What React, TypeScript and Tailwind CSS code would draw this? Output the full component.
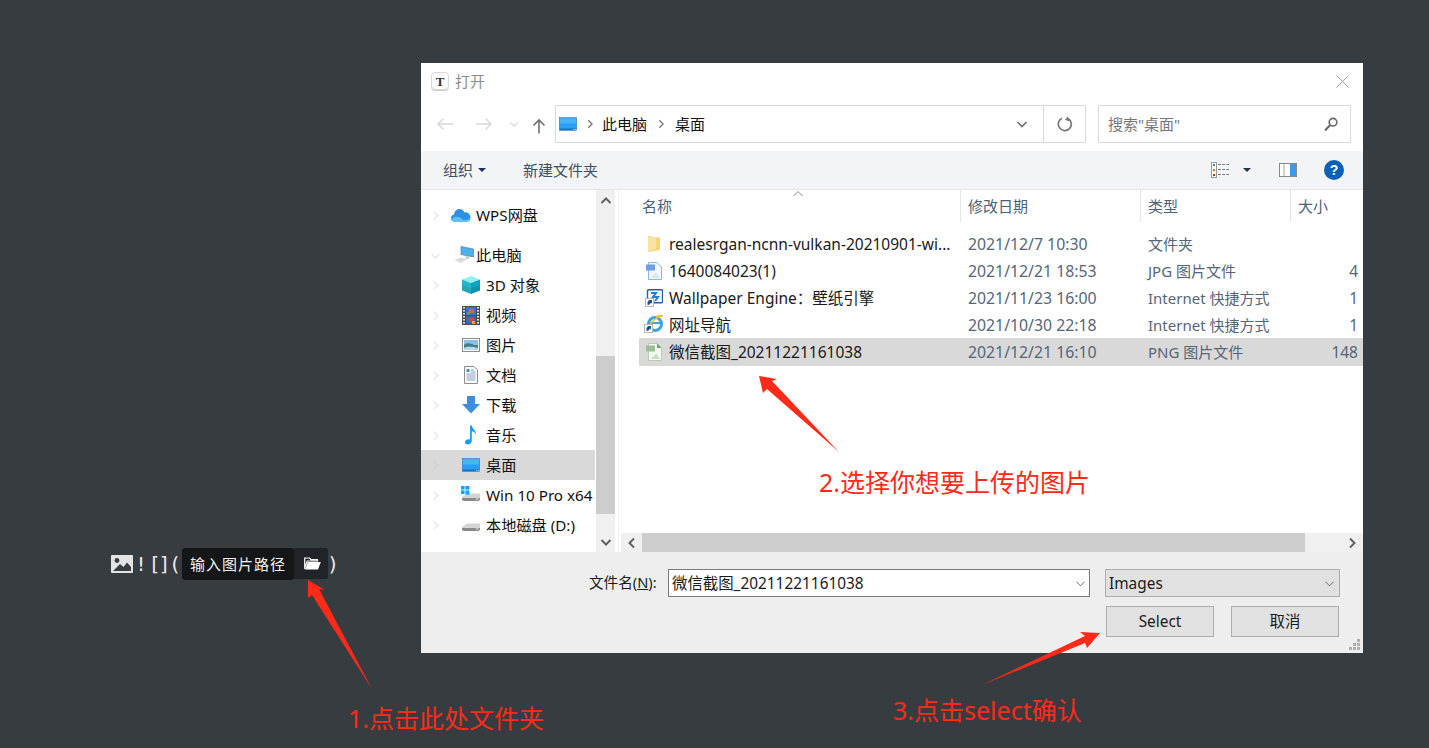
import React from "react";

const FONT = "font-['Noto_Sans','Noto_Sans_CJK_SC',sans-serif]";

function Chevron({ dir = "right", color = "#e6e6e6", size = 12, w = 1.5 }: { dir?: string; color?: string; size?: number; w?: number }) {
  const d: Record<string, string> = {
    right: "M4 1.5 L8.5 6 L4 10.5",
    left: "M8 1.5 L3.5 6 L8 10.5",
    down: "M1.5 4 L6 8.5 L10.5 4",
    up: "M1.5 8 L6 3.5 L10.5 8",
  };
  return (
    <svg width={size} height={size} viewBox="0 0 12 12" fill="none" className="shrink-0">
      <path d={d[dir]} stroke={color} strokeWidth={w} />
    </svg>
  );
}

function DesktopIcon({ w = 20, h = 15 }: { w?: number; h?: number }) {
  return (
    <svg width={w} height={h} viewBox="0 0 20 15" className="shrink-0">
      <rect x="0.5" y="0.5" width="19" height="14" fill="#2a9df4" stroke="#1a6fb5" strokeWidth="0.6" />
      <rect x="1" y="1" width="18" height="6" fill="#46b4f7" />
      <rect x="1" y="12.6" width="18" height="1.4" fill="#0f6cc0" />
      <rect x="16" y="13" width="1" height="1" fill="#fff" />
      <rect x="18" y="13" width="1" height="1" fill="#fff" />
    </svg>
  );
}

function Drive({ win = false }: { win?: boolean }) {
  return (
    <svg width="20" height="18" viewBox="0 0 20 18" className="shrink-0">
      <path d="M1 11 L6 7.5 H19 L19 12 L17 15 H3 L1 13 Z" fill="#d4d4d4" />
      <path d="M1 12 H19 V13.5 L17.5 15 H2.5 L1 13.5 Z" fill="#8a8a8a" />
      <rect x="15" y="12.5" width="2.5" height="1" fill="#e8f3e8" />
      {win && (
        <g fill="#12a5f4">
          <rect x="0" y="0" width="3.6" height="3.6" />
          <rect x="4.4" y="-0.6" width="4" height="4.2" />
          <rect x="0" y="4.4" width="3.6" height="3.6" />
          <rect x="4.4" y="4.4" width="4" height="4.2" />
        </g>
      )}
    </svg>
  );
}

function NavIcon({ name }: { name: string }) {
  switch (name) {
    case "cloud":
      return (
        <svg width="20" height="15" viewBox="0 0 20 15" className="shrink-0">
          <path d="M4.5 14 C1.5 14 0 12 0 10 C0 8 1.4 6.8 3 6.5 C3.5 3 6 1 8.5 1 C11 1 12.6 2.3 13.4 4.5 C14 4.2 15 4.2 16 4.6 C18 5.2 19.5 7.5 19.5 10 C19.5 12.5 17.5 14 15.5 14 Z" fill="#2c8fe8" />
          <path d="M1 11 C4 8 8 8 11 11 C13 13 17 12 19 10 C19 12.8 17.3 14 15.5 14 H4.5 C2.6 14 1.3 12.6 1 11 Z" fill="#63c0f7" />
        </svg>
      );
    case "pc":
      return (
        <svg width="20" height="18" viewBox="0 0 20 18" className="shrink-0">
          <path d="M7 0.5 L19.5 3 V11 L7 8.5 Z" fill="#4db1ee" stroke="#5b7f9b" strokeWidth="0.7" />
          <path d="M12 10 L15 10.6 V13 L11 12.5 Z" fill="#c2c8cc" />
          <path d="M0.5 14 L7 11.5 L13 13.5 L6.5 17 Z" fill="#d9dcde" />
        </svg>
      );
    case "3d":
      return (
        <svg width="18" height="18" viewBox="0 0 18 18" className="shrink-0">
          <path d="M9 0 L18 3.5 L9 7 L0 3.5 Z" fill="#8ef0f0" />
          <path d="M0 3.5 L9 7 V18 L0 14.5 Z" fill="#28b5c6" />
          <path d="M18 3.5 L9 7 V18 L18 14.5 Z" fill="#11a0c0" />
          <path d="M0 9 L9 12.5 L18 9 V14.5 L9 18 L0 14.5 Z" fill="#000" fillOpacity="0.08" />
        </svg>
      );
    case "video":
      return (
        <svg width="18" height="19" viewBox="0 0 18 19" className="shrink-0">
          <rect width="18" height="19" fill="#4b4b4b" />
          <g fill="#e2e2e2">
            {[1, 4, 7, 10, 13, 16].map((y) => (
              <React.Fragment key={y}>
                <rect x="1" y={y} width="2" height="1.6" />
                <rect x="15" y={y} width="2" height="1.6" />
              </React.Fragment>
            ))}
          </g>
          <rect x="4" y="1" width="10" height="8" fill="#3f6fd0" />
          <rect x="4" y="10" width="10" height="8" fill="#3a64c4" />
          <rect x="7" y="3" width="5" height="4" fill="#c0743a" />
          <rect x="7" y="12" width="5" height="4" fill="#d9453a" />
          <rect x="5" y="6" width="3" height="3" fill="#5ba24a" />
          <rect x="10" y="15" width="3" height="3" fill="#d8a83a" />
        </svg>
      );
    case "pic":
      return (
        <svg width="18" height="14" viewBox="0 0 18 14" className="shrink-0">
          <rect x="0.5" y="0.5" width="17" height="13" fill="#fff" stroke="#8c8c8c" />
          <rect x="2" y="2" width="14" height="5" fill="#8cc0ea" />
          <path d="M2 7 C5 4 9 5.5 12 7 H16 V12 H2 Z" fill="#3f7f8a" />
          <path d="M2 10 C6 8 11 9 16 10 V12 H2 Z" fill="#bcd7e4" />
        </svg>
      );
    case "doc":
      return (
        <svg width="14" height="18" viewBox="0 0 14 18" className="shrink-0">
          <path d="M0.5 0.5 H10 L13.5 4 V17.5 H0.5 Z" fill="#fbfbfb" stroke="#8c8c8c" />
          <rect x="2.5" y="3" width="3" height="3" fill="#3c8fd8" />
          <path d="M7 4 H10 M7 6 H11.5 M2.5 8 H11.5 M2.5 10 H11.5 M2.5 12 H11.5 M2.5 14 H11.5" stroke="#7a9cc0" strokeWidth="0.9" />
        </svg>
      );
    case "dl":
      return (
        <svg width="18" height="18" viewBox="0 0 18 18" className="shrink-0">
          <path d="M5 0 H13 V8 H18 L9 17.5 L0 8 H5 Z" fill="#3c8fe0" />
        </svg>
      );
    case "music":
      return (
        <svg width="12" height="20" viewBox="0 0 12 20" className="shrink-0">
          <path d="M5 0.5 H6.8 C7 4 11.5 5 11 10 C10.5 7.5 8.5 6.5 6.8 6.2 V16 C6.8 18.3 4.6 19.5 2.8 19.5 C1.2 19.5 0 18.5 0 17.2 C0 15.5 2 14.2 3.6 14.2 C4.1 14.2 4.6 14.3 5 14.5 Z" fill="#15a0ef" />
        </svg>
      );
    case "desk":
      return <DesktopIcon w={18} h={14} />;
    case "win":
      return <Drive win />;
    default:
      return <Drive />;
  }
}

const navItems = [
  { label: "WPS网盘", ic: "cloud", x: 0, chev: "right" },
  { kind: "gap", label: "", ic: "", x: 0 },
  { label: "此电脑", ic: "pc", x: 0, chev: "down" },
  { label: "3D 对象", ic: "3d", x: 1 },
  { label: "视频", ic: "video", x: 1 },
  { label: "图片", ic: "pic", x: 1 },
  { label: "文档", ic: "doc", x: 1 },
  { label: "下载", ic: "dl", x: 1 },
  { label: "音乐", ic: "music", x: 1 },
  { label: "桌面", ic: "desk", x: 1, sel: true },
  { label: "Win 10 Pro x64", ic: "win", x: 1 },
  { label: "本地磁盘 (D:)", ic: "drive", x: 1 },
];

function Sidebar() {
  return (
    <div className="w-[174px] shrink-0 overflow-hidden mr-[1px]">
      <div className="h-[10px]" />
      {navItems.map((it, i) =>
        (it as any).kind === "gap" ? (
          <div key={i} className="h-[10px]" />
        ) : (
          <div key={i} className={`h-[30px] flex items-center whitespace-nowrap text-[15.2px] text-[#111] ${(it as any).sel ? "bg-[#d9d9d9]" : ""}`}>
            <div className="w-[10px] ml-[9px] shrink-0 flex justify-center">
              <Chevron dir={(it as any).chev ?? "right"} color={(it as any).sel ? "#cfcfcf" : "#e8e8e8"} size={11} />
            </div>
            <div className={`shrink-0 flex justify-center ${it.x ? "ml-[21px] w-[20px]" : it.ic === "pc" ? "ml-[14px] w-[20px]" : "ml-[11px] w-[20px]"}`}>
              <NavIcon name={it.ic} />
            </div>
            <span className={`${it.x ? "ml-[5px]" : it.ic === "pc" ? "ml-[2px]" : "ml-[5px]"}`}>{it.label}</span>
          </div>
        )
      )}
    </div>
  );
}

function VScroll() {
  return (
    <div className="w-[19px] shrink-0 bg-[#f0f0f0] flex flex-col items-center">
      <div className="h-[21px] flex items-center justify-center shrink-0">
        <Chevron dir="up" color="#606060" size={12} w={2} />
      </div>
      <div className="h-[145px] shrink-0" />
      <div className="w-full h-[158px] shrink-0 bg-[#cdcdcd]" />
      <div className="flex-1" />
      <div className="h-[21px] flex items-center justify-center shrink-0">
        <Chevron dir="down" color="#606060" size={12} w={2} />
      </div>
    </div>
  );
}

function Shortcut() {
  return (
    <g>
      <rect x="0.5" y="9.5" width="8" height="8" fill="#fff" stroke="#b5b5b5" />
      <path d="M2.5 16 L2.5 13 L4 11.5 L3 11 H7 V15 L6.2 13.6 L4.2 15.8 Z" fill="#1f4f9a" />
    </g>
  );
}

function FileIcon({ name }: { name: string }) {
  switch (name) {
    case "folder":
      return (
        <svg width="14" height="18" viewBox="0 0 14 18">
          <path d="M1 1 H5 L6 2.5 H13 V15 L1 17 Z" fill="#f7d774" />
          <path d="M1 1 L9 2.5 V14 L1 17 Z" fill="#f9e3a1" />
        </svg>
      );
    case "jpg":
      return (
        <svg width="16" height="18" viewBox="0 0 16 18">
          <path d="M2.5 0.5 H11 L15.5 5 V17.5 H2.5 Z" fill="#f2f8fe" stroke="#86b7e8" />
          <rect x="0" y="2.5" width="9" height="6" fill="#6f9fe0" />
          <path d="M5 16 L10 10.5 L14 16 Z" fill="#d4e6f6" />
        </svg>
      );
    case "wall":
      return (
        <svg width="18" height="18" viewBox="0 0 18 18">
          <rect x="2.5" y="0.7" width="15" height="13" rx="1" fill="#fff" stroke="#1f5fae" strokeWidth="1.4" />
          <path d="M6 4 H11 L8 8 H13 L10 12" fill="none" stroke="#1f7fd0" strokeWidth="2" />
          <Shortcut />
        </svg>
      );
    case "ie":
      return (
        <svg width="20" height="20" viewBox="0 0 20 20">
          <circle cx="11" cy="9" r="6.5" fill="none" stroke="#3ba3e8" strokeWidth="3" />
          <path d="M4 8 H17" stroke="#3ba3e8" strokeWidth="2" />
          <path d="M4 13 C7 6 14 1 19 1 C17 0 14 0.5 12 2" fill="none" stroke="#f0c030" strokeWidth="1.5" />
          <Shortcut />
        </svg>
      );
    default:
      return (
        <svg width="16" height="18" viewBox="0 0 16 18">
          <path d="M2.5 0.5 H11 L15.5 5 V17.5 H2.5 Z" fill="#f4f7f2" stroke="#b7cdb0" />
          <path d="M11 0.5 V5 H15.5 Z" fill="#6ba85f" />
          <rect x="0" y="2.5" width="9" height="6" fill="#9dbd92" />
          <path d="M5 16 L10 10.5 L14 16 Z" fill="#c9dcc4" />
        </svg>
      );
  }
}

const files = [
  { ic: "folder", name: "realesrgan-ncnn-vulkan-20210901-wi...", date: "2021/12/7 10:30", type: "文件夹", size: "" },
  { ic: "jpg", name: "1640084023(1)", date: "2021/12/21 18:53", type: "JPG 图片文件", size: "4" },
  { ic: "wall", name: "Wallpaper Engine：壁纸引擎", date: "2021/11/23 16:00", type: "Internet 快捷方式", size: "1" },
  { ic: "ie", name: "网址导航", date: "2021/10/30 22:18", type: "Internet 快捷方式", size: "1" },
  { ic: "png", name: "微信截图_20211221161038", date: "2021/12/21 16:10", type: "PNG 图片文件", size: "148", sel: true },
];

function FileList() {
  return (
    <div className="flex-1 min-w-0 flex flex-col ml-[3px] border-l border-[#f0f0f0]">
      <div className="flex-1 min-h-0 ml-[1px]">
        <div className="relative h-[32px] flex text-[15px] leading-[20px] text-[#4c607a] whitespace-nowrap">
          <div className="w-[341px] pl-[22px] pt-[6px] border-r border-[#e5e5e5]">名称</div>
          <div className="w-[180px] pl-[7px] pt-[6px] border-r border-[#e5e5e5]">修改日期</div>
          <div className="w-[150px] pl-[7px] pt-[6px] border-r border-[#e5e5e5]">类型</div>
          <div className="pl-[7px] pt-[6px]">大小</div>
          <div className="absolute left-[172px] top-[-2px]">
            <Chevron dir="up" color="#8a8a8a" size={12} w={1} />
          </div>
        </div>
        <div className="h-[8px]" />
        {files.map((f) => (
          <div key={f.name} className={`ml-[19px] flex items-center whitespace-nowrap ${f.sel ? "h-[28px] bg-[#d9d9d9]" : "h-[27px]"}`}>
            <div className="w-[30px] shrink-0 flex justify-center">
              <FileIcon name={f.ic} />
            </div>
            <div className="w-[299px] shrink-0 mt-[2px] text-[15.5px] text-[#1a1a1a]">{f.name}</div>
            <div className="w-[180px] shrink-0 mt-[2px] text-[15.8px] text-[#566578]">{f.date}</div>
            <div className={`w-[150px] shrink-0 text-[15px] text-[#566578] ${f.sel ? "" : "mt-[2px]"}`}>{f.type}</div>
            <div className="flex-1 mt-[2px] text-right pr-[5px] text-[15.5px] text-[#566578]">{f.size}</div>
          </div>
        ))}
      </div>
      <div className="h-[19px] shrink-0 ml-[2px] flex bg-[#f0f0f0]">
        <div className="w-[21px] flex items-center justify-center">
          <Chevron dir="left" color="#606060" size={12} w={2} />
        </div>
        <div className="w-[663px] bg-[#cdcdcd]" />
        <div className="flex-1 flex items-center justify-end pr-[5px]">
          <Chevron dir="right" color="#606060" size={12} w={2} />
        </div>
      </div>
    </div>
  );
}

function Dialog() {
  return (
    <div className={`absolute left-[421px] top-[63px] w-[942px] h-[590px] bg-white flex flex-col ${FONT}`}>
      {/* title */}
      <div className="h-[36px] mb-[6px] shrink-0 flex items-center pl-[10px] pr-[14px]">
        <div className="w-[18px] h-[18px] rounded-[4px] border border-[#d8d8d8] flex items-center justify-center font-['Liberation_Serif',serif] font-bold text-[13px] text-[#333] leading-none shadow-[0_1px_0_#ccc]">
          T
        </div>
        <span className="ml-[6px] text-[15px] text-[#8c8c8c]">打开</span>
        <svg width="13" height="13" viewBox="0 0 13 13" className="ml-auto">
          <path d="M0.5 0.5 L12.5 12.5 M12.5 0.5 L0.5 12.5" stroke="#9a9a9a" strokeWidth="1" />
        </svg>
      </div>
      {/* address row */}
      <div className="h-[38px] shrink-0 flex items-center">
        <div className="w-[134px] flex items-center shrink-0 pl-[15px]">
          <svg width="18" height="14" viewBox="0 0 18 14"><path d="M17 7 H2 M7.5 1.5 L2 7 L7.5 12.5" fill="none" stroke="#d6d6d6" strokeWidth="1.4" /></svg>
          <svg width="18" height="14" viewBox="0 0 18 14" className="ml-[21px]"><path d="M1 7 H16 M10.5 1.5 L16 7 L10.5 12.5" fill="none" stroke="#d6d6d6" strokeWidth="1.4" /></svg>
          <div className="ml-[16px]"><Chevron dir="down" color="#d6d6d6" size={10} /></div>
          <svg width="14" height="16" viewBox="0 0 14 16" className="ml-[13px] mt-[4px]"><path d="M7 15.5 V2 M1.5 7.5 L7 2 L12.5 7.5" fill="none" stroke="#707070" strokeWidth="1.6" /></svg>
        </div>
        <div className="w-[531px] h-[38px] shrink-0 border border-[#d9d9d9] flex items-center text-[15px] text-[#111]">
          <div className="ml-[3px]"><DesktopIcon w={18} h={14} /></div>
          <div className="ml-[8px]"><Chevron dir="right" color="#707070" size={10} /></div>
          <span className="ml-[7px]">此电脑</span>
          <div className="ml-[9px]"><Chevron dir="right" color="#707070" size={10} /></div>
          <span className="ml-[9px]">桌面</span>
          <div className="ml-auto w-[43px] h-full flex items-center justify-center">
            <Chevron dir="down" color="#707070" size={12} w={1.6} />
          </div>
          <div className="w-[42px] h-full flex items-center justify-center border-l border-[#d9d9d9]">
            <svg width="16" height="16" viewBox="0 0 16 16"><path d="M11.5 2.7 A6.5 6.5 0 1 1 5 2.2" fill="none" stroke="#777" strokeWidth="1.7" /><path d="M3.5 0.5 L8 2.3 L5 5.5 Z" fill="#777" transform="rotate(180 8 3)" /></svg>
          </div>
        </div>
        <div className="ml-[12px] w-[253px] h-[38px] shrink-0 border border-[#d9d9d9] flex items-center pl-[9px] pr-[12px] text-[15px] text-[#777]">
          <span>搜索"桌面"</span>
          <svg width="14" height="15" viewBox="0 0 14 15" className="ml-auto"><circle cx="9" cy="5.2" r="3.8" fill="none" stroke="#666" strokeWidth="1.6" /><path d="M6 8.2 L1 13.5" stroke="#666" strokeWidth="2" /></svg>
        </div>
      </div>
      <div className="h-[8px] shrink-0" />
      {/* toolbar */}
      <div className="h-[39px] shrink-0 bg-[#f3f4f6] border-b border-[#e5e5e5] flex items-center text-[15px] text-[#3c4f68]">
        <span className="ml-[22px]">组织</span>
        <svg width="8" height="4" viewBox="0 0 8 4" className="ml-[5px]"><path d="M0 0 H8 L4 4 Z" fill="#1f3250" /></svg>
        <span className="ml-[37px]">新建文件夹</span>
        <svg width="18" height="16" viewBox="0 0 18 16" className="ml-auto">
          <rect x="0.5" y="0.5" width="5" height="15" fill="#fff" stroke="#9a9a9a" />
          <rect x="2" y="2" width="2" height="2" fill="#3f7fc0" />
          <rect x="2" y="7" width="2" height="2" fill="#8c8c2a" />
          <rect x="2" y="12" width="2" height="2" fill="#c0392b" />
          <path d="M7 2.5 H18 M7 7.5 H18 M7 12.5 H18" stroke="#7a7a7a" strokeWidth="1" strokeDasharray="3 1.2" />
        </svg>
        <svg width="8" height="4" viewBox="0 0 8 4" className="ml-[14px]"><path d="M0 0 H8 L4 4 Z" fill="#1f3250" /></svg>
        <svg width="18" height="14" viewBox="0 0 18 14" className="ml-[28px]">
          <rect x="0.5" y="0.5" width="17" height="13" fill="#fff" stroke="#8a8a8a" />
          <rect x="11" y="1" width="6" height="12" fill="#3f97e8" />
          <path d="M5 1 V13" stroke="#a8a8a8" />
        </svg>
        <svg width="20" height="20" viewBox="0 0 20 20" className="ml-[27px] mr-[19px]">
          <circle cx="10" cy="10" r="10" fill="#0a62b8" />
          <text x="10" y="15" textAnchor="middle" fontSize="14" fontWeight="700" fill="#fff" fontFamily="Liberation Sans, sans-serif">?</text>
        </svg>
      </div>
      {/* main */}
      <div className="h-[362px] shrink-0 flex">
        <Sidebar />
        <VScroll />
        <FileList />
      </div>
      {/* footer */}
      <div className="flex-1 bg-[#eeeeee] relative text-[15.4px] text-[#1a1a1a]">
        <div className="flex items-center h-[28px] mt-[17px]">
          <span className="ml-[168px] w-[79px] whitespace-nowrap text-[14.6px]">文件名(<span className="underline">N</span>):</span>
          <div className="w-[422px] h-[28px] bg-white border border-[#7a7a7a] flex items-center pl-[3px]">
            <span className="whitespace-nowrap mt-[2px]">微信截图_20211221161038</span>
            <div className="ml-auto mr-[3px]"><Chevron dir="down" color="#606060" size={11} w={1} /></div>
          </div>
          <div className="ml-[15px] w-[235px] h-[28px] bg-[#e1e1e1] border border-[#adadad] flex items-center pl-[3px]">
            <span className="mt-[2px]">Images</span>
            <div className="ml-auto mr-[4px]"><Chevron dir="down" color="#606060" size={11} w={1} /></div>
          </div>
        </div>
        <div className="flex mt-[9px] ml-[685px]">
          <div className="w-[108px] h-[31px] bg-[#e1e1e1] border border-[#adadad] flex items-center justify-center">Select</div>
          <div className="ml-[17px] w-[108px] h-[31px] bg-[#e1e1e1] border border-[#adadad] flex items-center justify-center">取消</div>
        </div>
        <svg width="12" height="12" viewBox="0 0 12 12" className="absolute right-[2px] bottom-[2px]">
          <g fill="#b0b0b0">
            <rect x="8" y="0" width="3" height="3" />
            <rect x="4" y="4" width="3" height="3" />
            <rect x="8" y="4" width="3" height="3" />
            <rect x="0" y="8" width="3" height="3" />
            <rect x="4" y="8" width="3" height="3" />
            <rect x="8" y="8" width="3" height="3" />
          </g>
        </svg>
      </div>
    </div>
  );
}

function EditorLine() {
  const sym = "h-[31px] flex items-center justify-center font-['DejaVu_Sans_Mono',monospace] text-[20px] text-[#e8e8e8]";
  return (
    <div className={`absolute left-[111px] top-[548px] h-[32px] flex items-start ${FONT}`}>
      <div className="h-[31px] flex items-center">
        <svg width="22" height="18" viewBox="0 0 22 18">
          <rect width="22" height="18" rx="1" fill="#e3e3e3" />
          <circle cx="6" cy="5.5" r="2.4" fill="#373c41" />
          <path d="M2 16 L9 9 L12.5 12 L16 7.5 L20 12 V16 Z" fill="#373c41" />
        </svg>
      </div>
      <span className={`ml-[2px] w-[12px] ${sym}`}>!</span>
      <span className={`ml-[2px] w-[19px] tracking-[-2px] ${sym}`}>[]</span>
      <span className={`w-[14px] ${sym}`}>(</span>
      <div className="w-[112px] h-[32px] bg-[#141618] rounded-[3px] flex items-center pl-[8px] text-[15px] tracking-[1px] text-[#f2f2f2] whitespace-nowrap">
        输入图片路径
      </div>
      <div className="w-[34px] h-[31px] bg-[#202327] rounded-r-[3px] flex items-center justify-center pl-[3px]">
        <svg width="17" height="13" viewBox="0 0 17 13">
          <path d="M0.7 12 V1 H5.5 L7 2.7 H13.5 V4 H3.2 L0.7 11" fill="none" stroke="#fff" strokeWidth="1.2" />
          <path d="M1 12.5 L3.8 5 H16.8 L14 12.5 Z" fill="#fff" />
        </svg>
      </div>
      <span className={`w-[10px] ${sym}`}>)</span>
    </div>
  );
}

function Arrows() {
  return (
    <svg width="1429" height="748" viewBox="0 0 1429 748" className="absolute left-0 top-0 pointer-events-none">
      <g fill="#ff2a17">
        <polygon points="308,580 325,590 319,589 372,689 312,595 308,598" />
        <polygon points="759,376 777,379 772,381 839,452 767,389 763,393" />
        <polygon points="1100,633 1087,648 1085,643 982,685 1085,636 1080,632" />
      </g>
    </svg>
  );
}

function Notes() {
  return (
    <div className={`text-[25px] leading-none text-[#ff2a17] whitespace-nowrap ${FONT}`}>
      <span className="absolute left-[348px] top-[706px]">1.点击此处文件夹</span>
      <span className="absolute left-[819px] top-[470px]">2.选择你想要上传的图片</span>
      <span className="absolute left-[893px] top-[698px]">3.点击select确认</span>
    </div>
  );
}

export default function App() {
  return (
    <div className="relative w-[1429px] h-[748px] overflow-hidden bg-[#373c41]">
      <EditorLine />
      <Dialog />
      <Arrows />
      <Notes />
    </div>
  );
}
